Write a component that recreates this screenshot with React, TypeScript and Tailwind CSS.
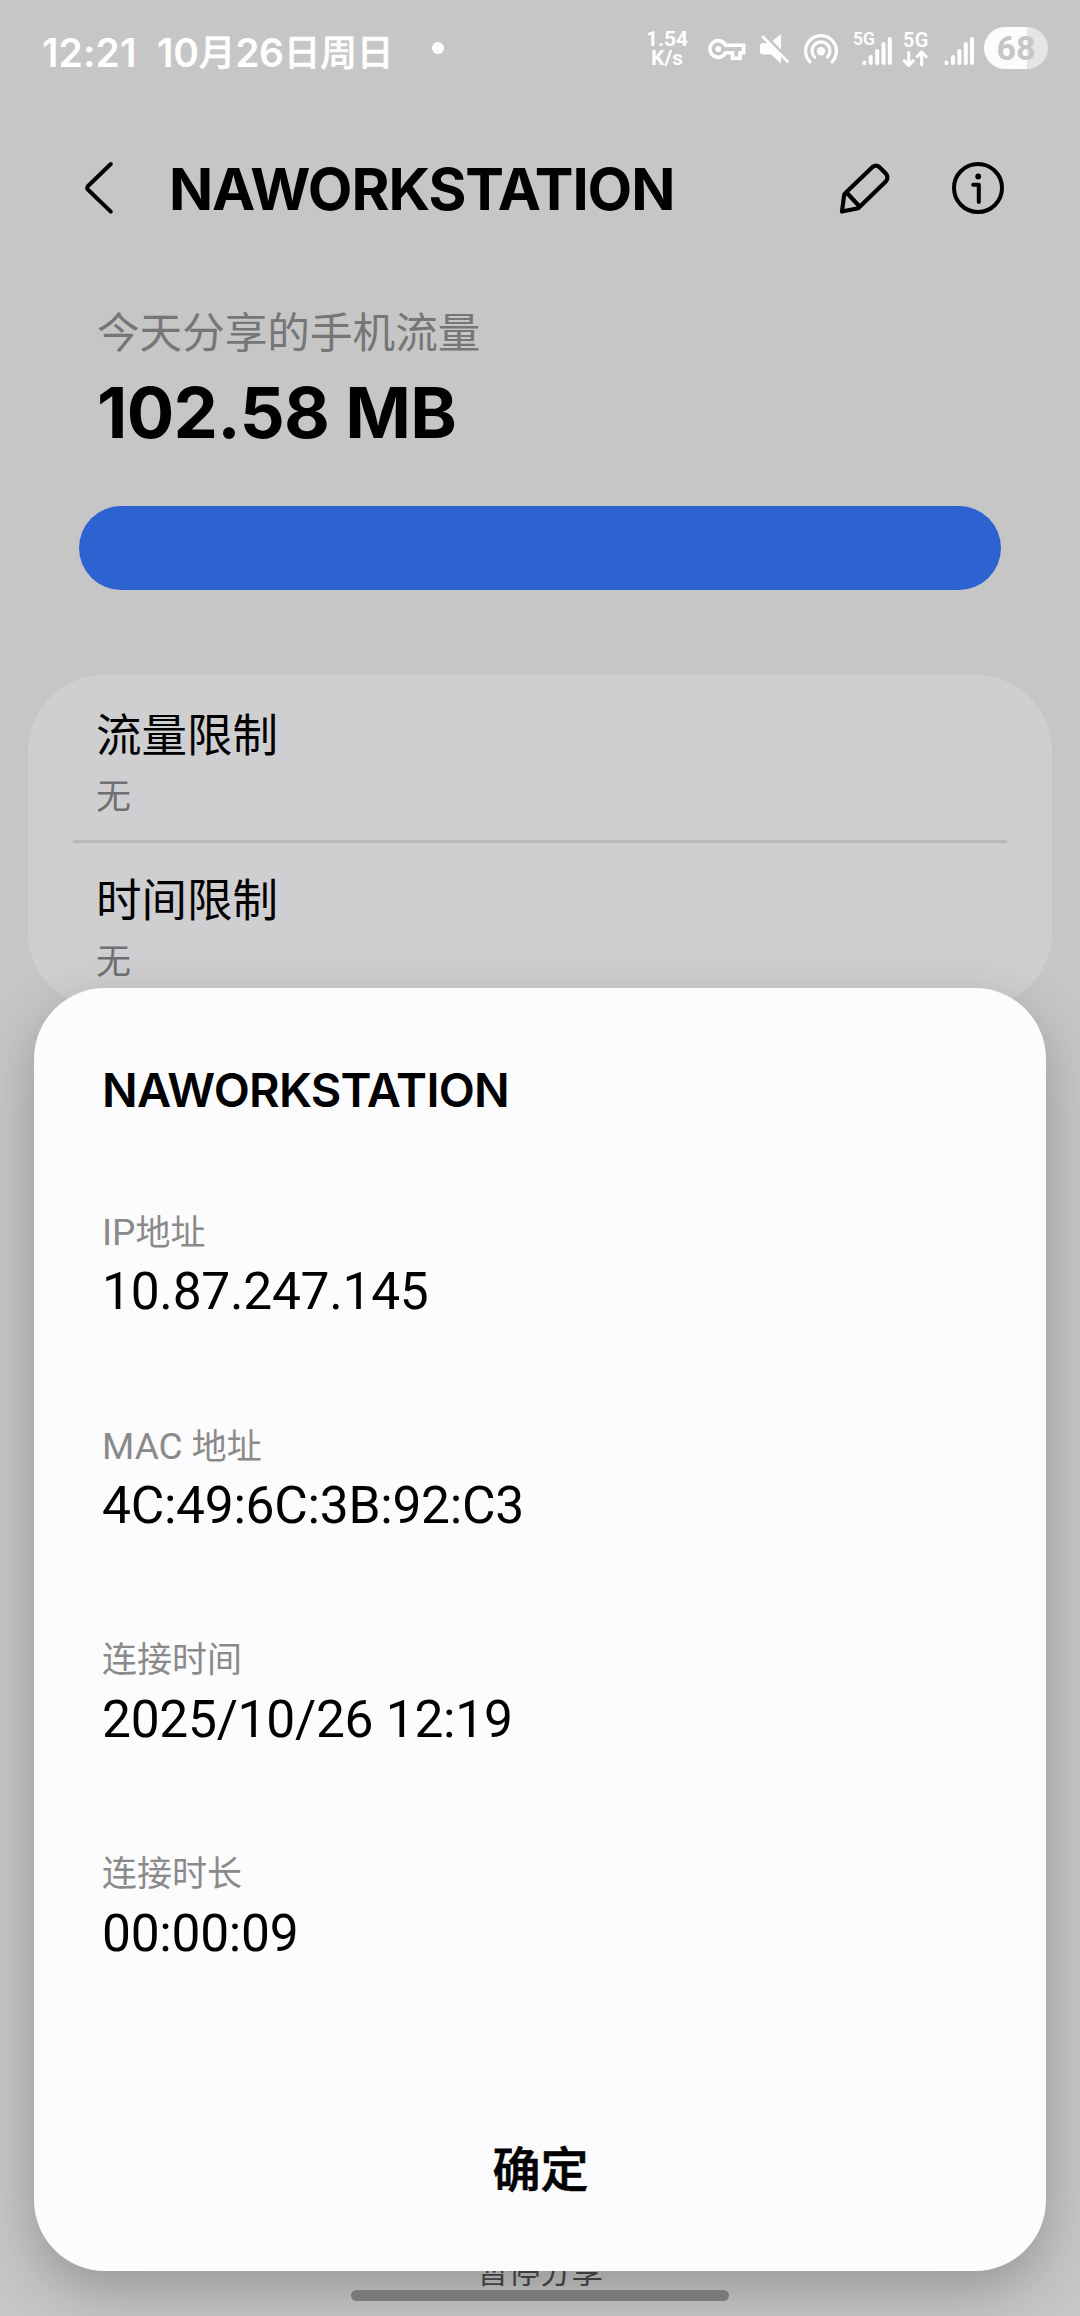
import type { ReactNode } from 'react';

const latin = "font-['Inter','Noto_Sans_CJK_SC',sans-serif]";
const cjk = "font-['Noto_Sans_CJK_SC',sans-serif]";
const roboto = "font-['Roboto','Noto_Sans_CJK_SC',sans-serif]";

function StatusIcons() {
  return (
    <div className="flex h-[80px] items-start text-white">
      <div className="mt-[30px] w-[44px] text-center font-['Roboto',sans-serif] text-[21px] font-bold leading-[19px]">
        <div>1.54</div>
        <div>K/s</div>
      </div>
      <svg className="ml-[19px] h-[80px] w-[38px]" viewBox="708 0 38 80" fill="none" stroke="currentColor">
        <path
          d="M725.6 45.2H743.6V52.8H740V58.2H732.5V52.8H725.6A8.3 8.3 0 1 1 725.6 45.2Z"
          strokeWidth="3.6"
          strokeLinejoin="miter"
        />
        <circle cx="718.3" cy="49" r="3" fill="currentColor" stroke="none" />
      </svg>
      <svg className="ml-[13px] h-[80px] w-[31px]" viewBox="759 0 31 80" fill="currentColor">
        <path d="M781 34V49.5L772.5 41Z" />
        <path d="M763 43H767L781 56.5V63.5L771 54.5H763Q760 54.5 760 51.5V46Q760 43 763 43Z" />
        <path d="M763 37L787.5 61.5" stroke="currentColor" strokeWidth="2.8" strokeLinecap="round" />
      </svg>
      <svg className="ml-[13px] h-[80px] w-[36px]" viewBox="803 0 36 80" fill="none" stroke="currentColor" strokeWidth="3.2" strokeLinecap="round">
        <path d="M810 61.8A15.4 15.4 0 1 1 832 61.8" />
        <path d="M814.6 57A8.9 8.9 0 1 1 827.4 57" />
        <circle cx="821" cy="51.3" r="4.2" fill="currentColor" stroke="none" />
      </svg>
      <svg className="ml-[13px] h-[80px] w-[41px]" viewBox="852 0 41 80" stroke="currentColor" strokeWidth="4" strokeLinecap="round">
        <text x="853" y="45" stroke="none" fill="currentColor" fontFamily="Roboto" fontWeight="600" fontSize="17.5" textLength="22">
          5G
        </text>
        <path d="M864.3 62.5V63M870.7 57V63M877.2 51V63M883.5 44V63M889.8 39V63" />
      </svg>
      <svg className="ml-[9px] h-[80px] w-[28px]" viewBox="902 0 28 80" fill="none" stroke="currentColor" strokeWidth="3.2" strokeLinecap="round" strokeLinejoin="round">
        <text x="903" y="47" stroke="none" fill="currentColor" fontFamily="Roboto" fontWeight="600" fontSize="20" textLength="25.5">
          5G
        </text>
        <path d="M908.7 52.5V65M904.3 60.8L908.7 65.3L913.1 60.8M921.7 64.5V52M917.3 56.5L921.7 52L926.1 56.5" />
      </svg>
      <svg className="ml-[14px] h-[80px] w-[32px]" viewBox="944 0 32 80" stroke="currentColor" strokeWidth="4" strokeLinecap="round">
        <path d="M946.5 62.5V63M953 57V63M959.4 51V63M965.8 44V63M972 39V63" />
      </svg>
      <div className="ml-[8px] mt-[27px] flex h-[42px] w-[64px] items-center justify-center rounded-full bg-linear-to-r from-[#fcfcfc] from-[67%] to-[#e5e5e5] to-[67%]">
        <span className="font-['Roboto',sans-serif] text-[34px] font-bold leading-[42px] text-[#c6c6c6]">68</span>
      </div>
    </div>
  );
}

function StatusBar() {
  return (
    <div className={`${latin} flex h-[106px] items-start pl-[42px] pr-[32px] text-white`}>
      <div className="flex h-[106px] items-center whitespace-nowrap text-[39px] font-semibold leading-[106px]">
        <span className="w-[115px] tracking-[0.1px]">12:21</span>
        <span className="flex w-[235px] items-center text-[39px] tracking-[-0.3px]">
          10
          <span className="text-[36.8px] font-medium [-webkit-text-stroke:0.5px_white]">月</span>
          26
          <span className="text-[36.8px] font-medium [-webkit-text-stroke:0.5px_white]">日周日</span>
        </span>
      </div>
      <div className="ml-[40px] mt-[42px] size-[12px] rounded-full bg-white" />
      <div className="ml-auto">
        <StatusIcons />
      </div>
    </div>
  );
}

function Header() {
  return (
    <div className="flex h-[166px] items-center pl-[84px] pr-[75px]">
      <svg className="mb-[2px] h-[56px] w-[32px]" viewBox="84 160 32 56" fill="none" stroke="black" strokeWidth="4" strokeLinecap="round" strokeLinejoin="round">
        <path d="M110.8 164L87.8 186.3Q86.6 188 87.8 189.5L110.8 211.6" />
      </svg>
      <h1 className={`${latin} ml-[53px] text-[58px] font-bold leading-[80px] tracking-[-1.1px] text-black`}>NAWORKSTATION</h1>
      <svg className="mb-[2px] ml-auto h-[56px] w-[56px]" viewBox="836 160 56 56" fill="none" stroke="black" strokeWidth="4.2" strokeLinecap="round" strokeLinejoin="round">
        <path d="M846.5 192L872.5 167Q876 164.3 879.3 167L886 173.8Q888.8 177.5 886 181.3L860 206.5Q859 208.2 857 208.5L842 211.5L844 196Q844.5 193.5 846.5 192ZM847.5 193.5L859.5 206.5" />
      </svg>
      <svg className="mb-[2px] ml-[57px] h-[56px] w-[56px]" viewBox="949 160 56 56" fill="none" stroke="black" strokeWidth="4" strokeLinecap="round" strokeLinejoin="round">
        <circle cx="978" cy="188" r="24" />
        <circle cx="978.2" cy="176.5" r="2.9" fill="black" stroke="none" />
        <path d="M973.2 184.8H978.8V202" />
      </svg>
    </div>
  );
}

function Limit({ title, value }: { title: string; value: string }) {
  return (
    <div className={`${cjk} h-[162px] pl-[68px] pt-[25px]`}>
      <div className="text-[45.5px] leading-[58px] text-black">{title}</div>
      <div className="mt-[13px] text-[35px] leading-[40px] text-[#707071]">{value}</div>
    </div>
  );
}

function Detail({ label, value }: { label: ReactNode; value: string }) {
  return (
    <div className={`${roboto} h-[214px] whitespace-nowrap`}>
      <div className="h-[44px] text-[35px] leading-[45px] text-[#8a8a8b]">{label}</div>
      <div className="mt-[8px] text-[51.5px] leading-[60px] tracking-[-0.28px] text-black">{value}</div>
    </div>
  );
}

export default function App() {
  return (
    <div className="relative h-[2316px] w-[1080px] overflow-hidden bg-[#c6c6c6]">
      <StatusBar />
      <Header />
      <div className="px-[97px] pt-[30px]">
        <div className={`${cjk} text-[42.6px] leading-[56px] text-[#767676]`}>今天分享的手机流量</div>
        <div className={`${latin} mt-[13px] text-[70.5px] font-bold leading-[84px] tracking-[-0.7px] text-black`}>102.58 MB</div>
      </div>
      <div className="mx-[79px] mt-[51px] h-[84px] rounded-[42px] bg-[#2c63d1]" />
      <div className="mx-[28px] mt-[85px] h-[333px] rounded-[76px] bg-[#cfcfd1] pt-[3px]">
        <Limit title="流量限制" value="无" />
        <div className="mx-[45px] h-[3px] bg-[#bababc]" />
        <Limit title="时间限制" value="无" />
      </div>
      <div className={`${cjk} absolute inset-x-0 top-[2248px] text-center text-[31.5px] leading-[42px] text-[#4a4a4a]`}>暂停分享</div>
      <div className="absolute left-[34px] top-[988px] flex h-[1283px] w-[1012px] flex-col rounded-[71px] bg-[#fcfcfe] px-[68px] pt-[70px] shadow-[0_19px_54px_rgba(0,0,0,0.24)]">
        <h2 className={`${latin} text-[47px] font-semibold leading-[64px] tracking-[-0.75px] text-black`}>NAWORKSTATION</h2>
        <div className="mt-[88px]">
          <Detail label={<><span className="text-[37px]">IP</span>地址</>} value="10.87.247.145" />
          <Detail label={<><span className="text-[37px]">MAC </span>地址</>} value="4C:49:6C:3B:92:C3" />
          <Detail label="连接时间" value="2025/10/26 12:19" />
          <Detail label="连接时长" value="00:00:09" />
        </div>
        <button className={`${cjk} ml-[1px] mt-[68px] self-center text-[48px] font-medium leading-[64px] text-black [-webkit-text-stroke:0.7px_black]`}>确定</button>
      </div>
      <div className="absolute left-[351px] top-[2290px] h-[11px] w-[378px] rounded-full bg-[#797979]" />
    </div>
  );
}
